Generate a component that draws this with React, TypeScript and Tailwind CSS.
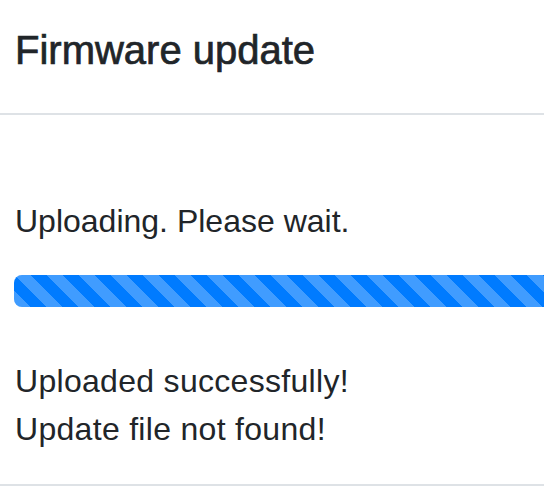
import React from 'react'

export default function App() {
    const messages = ["Uploaded successfully!", "Update file not found!"]

    return (
        <div className='w-[544px] h-[500px] overflow-hidden bg-white text-[#212529] font-["Liberation_Sans",Arial,sans-serif]'>
            {/* Header */}
            <div className='pl-[15px] pt-[20px] pb-[33px] border-b-2 border-[#dee2e6]'>
                <h5 className='text-[40px] leading-[60px] font-medium [-webkit-text-stroke:0.7px_#212529]'>Firmware update</h5>
            </div>

            {/* Body */}
            <div className='pl-[14px] pt-[82px] pb-[31px] text-[32px] leading-[48px]'>
                <p className='pl-[1px]'>Uploading. Please wait.</p>

                <div className='mt-[30px] h-[32px] w-[calc(100%+16px)] rounded-[8px] overflow-hidden bg-[#e9ecef] flex'>
                    <div className='w-full h-full bg-[#007bff] bg-[linear-gradient(45deg,rgba(255,255,255,.25)_25%,transparent_25%,transparent_50%,rgba(255,255,255,.25)_50%,rgba(255,255,255,.25)_75%,transparent_75%,transparent)] bg-[length:32px_32px]'></div>
                </div>

                <div className='mt-[50px] pl-[1px] tracking-[0.3px]'>
                    {messages.map((msg, index) => (
                        <p key={index}>{msg}</p>
                    ))}
                </div>
            </div>

            <div className='border-t-2 border-[#dee2e6]'></div>
        </div>
    )
}
